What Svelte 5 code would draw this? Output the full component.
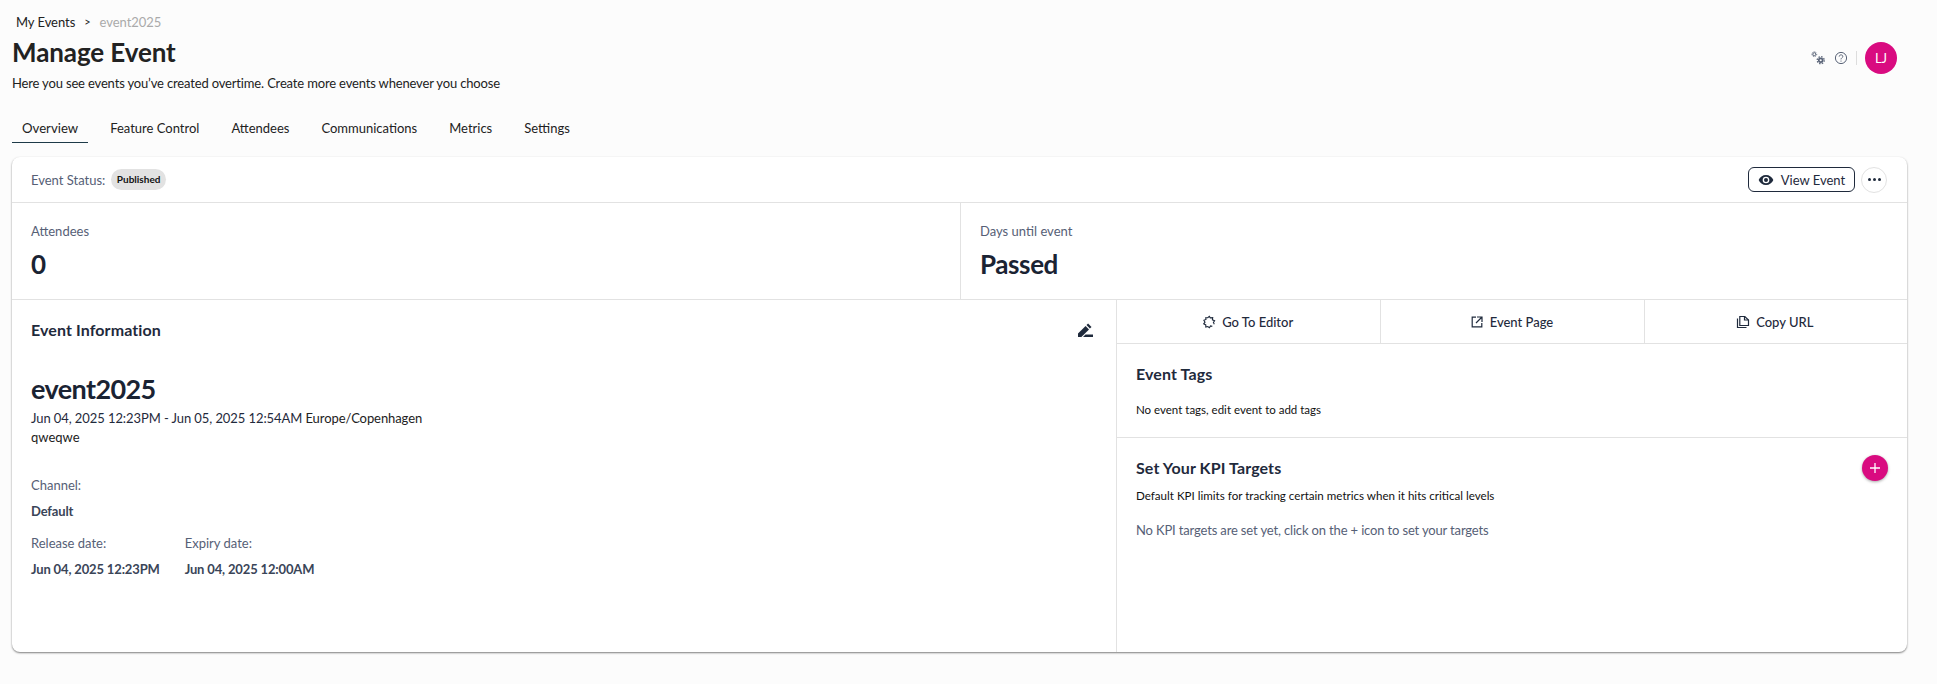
<script>
  let tabs = ['Overview', 'Feature Control', 'Attendees', 'Communications', 'Metrics', 'Settings'];
  let active = 'Overview';
</script>

<div class="page">
  <header class="top">
    <div>
      <div class="crumbs"><span>My Events</span><span class="sep">&gt;</span><span class="current">event2025</span></div>
      <h1>Manage Event</h1>
      <p class="sub">Here you see events you’ve created overtime. Create more events whenever you choose</p>
    </div>
    <div class="tools">
      <svg class="gears" width="14" height="14" viewBox="0 0 14 14" fill="none" stroke="#5a6478">
        <circle cx="3.3" cy="3.2" r="1.5" stroke-width="1" />
        <circle cx="3.3" cy="3.2" r="2.4" stroke-width="0.9" stroke-dasharray="1 0.9" />
        <circle cx="9.7" cy="9.2" r="1.9" stroke-width="1.7" />
        <circle cx="9.7" cy="9.2" r="3.5" stroke-width="1.3" stroke-dasharray="1.5 1.25" />
      </svg>
      <svg width="14" height="14" viewBox="0 0 14 14" fill="none" stroke="#5a6478">
        <circle cx="7" cy="7" r="5.6" />
        <path d="M5.2 5.6c0-2.3 3.6-2.3 3.6-.2 0 1.400-1.800 1.400-1.800 3" />
        <path d="M7 9.600v1" />
      </svg>
      <span class="divider"></span>
      <div class="avatar">LJ</div>
    </div>
  </header>

  <nav class="tabs">
    {#each tabs as tab}
      <div class="tab" class:active={tab === active}>{tab}</div>
    {/each}
  </nav>

  <section class="card">
    <div class="status">
      <div class="status-left">
        <span class="muted">Event Status:</span>
        <span class="badge">Published</span>
      </div>
      <div class="status-right">
        <button class="view">
          <svg width="16" height="16" viewBox="0 0 24 24" fill="#1f2a3c"><path d="M12 4.500C7 4.500 2.700 7.600 1 12c1.700 4.400 6 7.500 11 7.500s9.300-3.100 11-7.500c-1.700-4.400-6-7.500-11-7.500zm0 12.500a5 5 0 1 1 0-10 5 5 0 0 1 0 10zm0-8a3 3 0 1 0 0 6 3 3 0 0 0 0-6z" /></svg>
          View Event
        </button>
        <button class="more" aria-label="More"><i></i><i></i><i></i></button>
      </div>
    </div>

    <div class="stats">
      <div class="stat">
        <div class="muted">Attendees</div>
        <div class="value">0</div>
      </div>
      <div class="stat">
        <div class="muted">Days until event</div>
        <div class="value">Passed</div>
      </div>
    </div>

    <div class="lower">
      <div class="info">
        <div class="info-head">
          <h2>Event Information</h2>
          <svg width="18" height="18" viewBox="0 0 18 18" fill="#1f2a3c">
            <path d="M2 12.600 9.600 5l3.400 3.400L5.400 16H2z" />
            <path d="M10.500 4.100l1.600-1.600 3.400 3.400-1.600 1.600z" />
            <path d="M9.500 13.500h7.500v2.500H7z" />
          </svg>
        </div>
        <div class="name">event2025</div>
        <div class="dates">Jun 04, 2025 12:23PM - Jun 05, 2025 12:54AM <span>Europe/Copenhagen</span></div>
        <div class="desc">qweqwe</div>
        <div class="field channel">
          <div class="muted">Channel:</div>
          <div class="strong">Default</div>
        </div>
        <div class="pair">
          <div class="field">
            <div class="muted">Release date:</div>
            <div class="strong">Jun 04, 2025 12:23PM</div>
          </div>
          <div class="field">
            <div class="muted">Expiry date:</div>
            <div class="strong">Jun 04, 2025 12:00AM</div>
          </div>
        </div>
      </div>

      <div class="side">
        <div class="actions">
          <div class="action">
            <svg width="14" height="14" viewBox="0 0 14 14" fill="none" stroke="#1f2a3c" stroke-width="1.1">
              <path d="M10.300 11.400 8.500 10.900 7.400 12.700 5.800 11.500 3.800 12V9.900L1.700 8.800 3 7.100 1.900 5.200 4 4.500 3.700 2.800 5.800 2.600 7.300 1.400 8.300 2.900 10.700 2.700 10.400 4.800 12.600 5.700 11.400 7.400 12.300 9.300" />
            </svg>
            Go To Editor
          </div>
          <div class="action">
            <svg width="14" height="14" viewBox="0 0 14 14" fill="none" stroke="#1f2a3c" stroke-width="1.2">
              <path d="M6 2.200H2.200v9.600h9.600V8" />
              <path d="M7 2h5v5M12 2 6 8" />
            </svg>
            Event Page
          </div>
          <div class="action">
            <svg width="14" height="14" viewBox="0 0 14 14" fill="none" stroke="#1f2a3c" stroke-width="1.2">
              <path d="M1.500 3.500v9h9" />
              <path d="M3.800 1.500h5l3.700 3.500v5.500H3.800z" />
              <path d="M8.500 1.500V5h4" />
            </svg>
            Copy URL
          </div>
        </div>

        <div class="tags">
          <h2>Event Tags</h2>
          <p class="small">No event tags, edit event to add tags</p>
        </div>

        <div class="kpi">
          <div class="kpi-head">
            <h2>Set Your KPI Targets</h2>
            <button class="add" aria-label="Add">
              <svg width="12" height="12" viewBox="0 0 12 12" stroke="#fff" stroke-width="1.3"><path d="M6 1v10M1 6h10" /></svg>
            </button>
          </div>
          <p class="small">Default KPI limits for tracking certain metrics when it hits critical levels</p>
          <p class="empty">No KPI targets are set yet, click on the + icon to set your targets</p>
        </div>
      </div>
    </div>
  </section>
</div>

<style>
  :global(body) {
    background: #fcfcfc;
    font-family: Lato, "Open Sans", sans-serif;
    color: #1f2a3c;
  }
  .page {
    padding: 0 30px 0 12px;
    height: 684px;
    box-sizing: border-box;
  }
  .top {
    display: flex;
    justify-content: space-between;
    align-items: flex-start;
    height: 110px;
  }
  .crumbs {
    display: flex;
    gap: 9px;
    padding: 14px 0 0 4px;
    font-size: 13px;
    line-height: 16px;
    color: #222;
    letter-spacing: -0.05px;
  }
  .sep {
    font-size: 11px;
  }
  .current {
    color: #aaa;
  }
  h1 {
    margin: 6px 0 0;
    font-size: 26px;
    line-height: 32px;
    font-weight: 700;
    color: #222;
    letter-spacing: -0.1px;
  }
  .sub {
    margin: 6px 0 0;
    font-size: 13px;
    line-height: 18px;
    color: #222;
    letter-spacing: -0.16px;
  }
  .tools {
    display: flex;
    align-items: center;
    gap: 8px;
    padding-top: 42px;
    margin-right: 10px;
  }
  .gears {
    margin-right: 1px;
  }
  .divider {
    width: 1px;
    height: 14px;
    background: #ddd;
  }
  .avatar {
    width: 32px;
    height: 32px;
    border-radius: 50%;
    background: #d90b80;
    color: #fff;
    font-size: 13px;
    display: flex;
    align-items: center;
    justify-content: center;
  }
  .tabs {
    display: flex;
    gap: 12px;
    height: 33px;
    margin-bottom: 14px;
  }
  .tab {
    padding: 9px 10px 0;
    font-size: 13px;
    line-height: 18px;
    color: #222;
    box-sizing: border-box;
  }
  .tab.active {
    border-bottom: 1px solid #1d3a48;
    font-size: 13.2px;
  }
  .card {
    background: #fff;
    border-radius: 8px;
    height: 495px;
    box-shadow: 0 1px 2px rgba(0, 0, 0, 0.5);
    display: flex;
    flex-direction: column;
  }
  .status {
    height: 45px;
    flex: none;
    padding: 0 20px 0 19px;
    border-bottom: 1px solid #e2e2e2;
    display: flex;
    justify-content: space-between;
    align-items: center;
  }
  .status-left,
  .status-right {
    display: flex;
    align-items: center;
    gap: 6px;
  }
  .muted {
    font-size: 13px;
    line-height: 18px;
    color: #566076;
  }
  .badge {
    background: #e2e2e2;
    border-radius: 11px;
    padding: 0 5.5px;
    font-size: 10px;
    line-height: 21px;
    color: #111;
    font-weight: 700;
  }
  .view {
    height: 25px;
    width: 107px;
    border: 1px solid #1f2a3c;
    border-radius: 6px;
    background: #fff;
    display: flex;
    align-items: center;
    justify-content: center;
    gap: 7px;
    font: 13px Lato, sans-serif;
    color: #1f2a3c;
    padding: 0;
  }
  .more {
    width: 26px;
    height: 26px;
    border-radius: 50%;
    border: 1px solid #e2e2e2;
    background: #fff;
    display: flex;
    align-items: center;
    justify-content: center;
    gap: 2px;
    padding: 0;
  }
  .more i {
    width: 3px;
    height: 3px;
    border-radius: 50%;
    background: #1f2a3c;
  }
  .stats {
    display: grid;
    grid-template-columns: 948px 1fr;
    height: 97px;
    flex: none;
    border-bottom: 1px solid #e2e2e2;
    box-sizing: border-box;
  }
  .stat {
    padding: 19px 19px 0;
  }
  .stat + .stat {
    border-left: 1px solid #e2e2e2;
  }
  .value {
    font-size: 26px;
    line-height: 32px;
    font-weight: 700;
    margin-top: 8px;
    color: #1a2333;
    letter-spacing: -0.4px;
  }
  .lower {
    flex: 1;
    display: grid;
    grid-template-columns: 1105px 1fr;
    min-height: 0;
  }
  .info {
    padding: 20px 19px;
    border-right: 1px solid #e2e2e2;
  }
  .info-head {
    display: flex;
    justify-content: space-between;
    align-items: center;
    padding-right: 3px;
  }
  h2 {
    margin: 0;
    font-size: 16px;
    line-height: 20px;
    font-weight: 700;
    color: #1f2a3c;
    letter-spacing: 0.1px;
  }
  .name {
    margin-top: 32px;
    font-size: 27px;
    line-height: 34px;
    font-weight: 700;
    color: #1a2333;
    letter-spacing: -0.6px;
  }
  .dates {
    margin-top: 3px;
    font-size: 13px;
    line-height: 19px;
    color: #1f2a3c;
    letter-spacing: -0.08px;
  }
  .dates span {
    color: #222;
  }
  .desc {
    font-size: 13px;
    line-height: 19px;
    color: #222;
  }
  .channel {
    margin-top: 29px;
  }
  .field .strong {
    margin-top: 8px;
    font-size: 13px;
    line-height: 18px;
    font-weight: 700;
    color: #3a4558;
    letter-spacing: -0.15px;
  }
  .pair {
    display: flex;
    gap: 25px;
    margin-top: 14px;
  }
  .side {
    display: flex;
    flex-direction: column;
  }
  .actions {
    display: grid;
    grid-template-columns: repeat(3, 1fr);
    height: 44px;
    border-bottom: 1px solid #e2e2e2;
    box-sizing: border-box;
    flex: none;
  }
  .action {
    display: flex;
    align-items: center;
    justify-content: center;
    gap: 6px;
    padding-right: 2px;
    font-size: 13px;
    font-weight: 500;
  }
  .action + .action {
    border-left: 1px solid #e2e2e2;
  }
  .tags {
    padding: 20px 19px 0;
    height: 94px;
    box-sizing: border-box;
    border-bottom: 1px solid #e2e2e2;
    flex: none;
  }
  .small {
    margin: 18px 0 0;
    font-size: 11.5px;
    line-height: 16px;
    color: #111;
  }
  .kpi {
    padding: 20px 19px 0;
  }
  .kpi-head {
    display: flex;
    justify-content: space-between;
    align-items: center;
    height: 20px;
  }
  .kpi .small {
    margin-top: 10px;
    font-size: 11.6px;
  }
  .add {
    width: 26px;
    height: 26px;
    border-radius: 50%;
    border: 0;
    padding: 0;
    background: #d90b80;
    box-shadow: 0 1px 3px rgba(0, 0, 0, 0.35);
    display: flex;
    align-items: center;
    justify-content: center;
  }
  .empty {
    margin: 17px 0 0;
    font-size: 13px;
    line-height: 18px;
    color: #566076;
    letter-spacing: -0.15px;
  }
</style>
